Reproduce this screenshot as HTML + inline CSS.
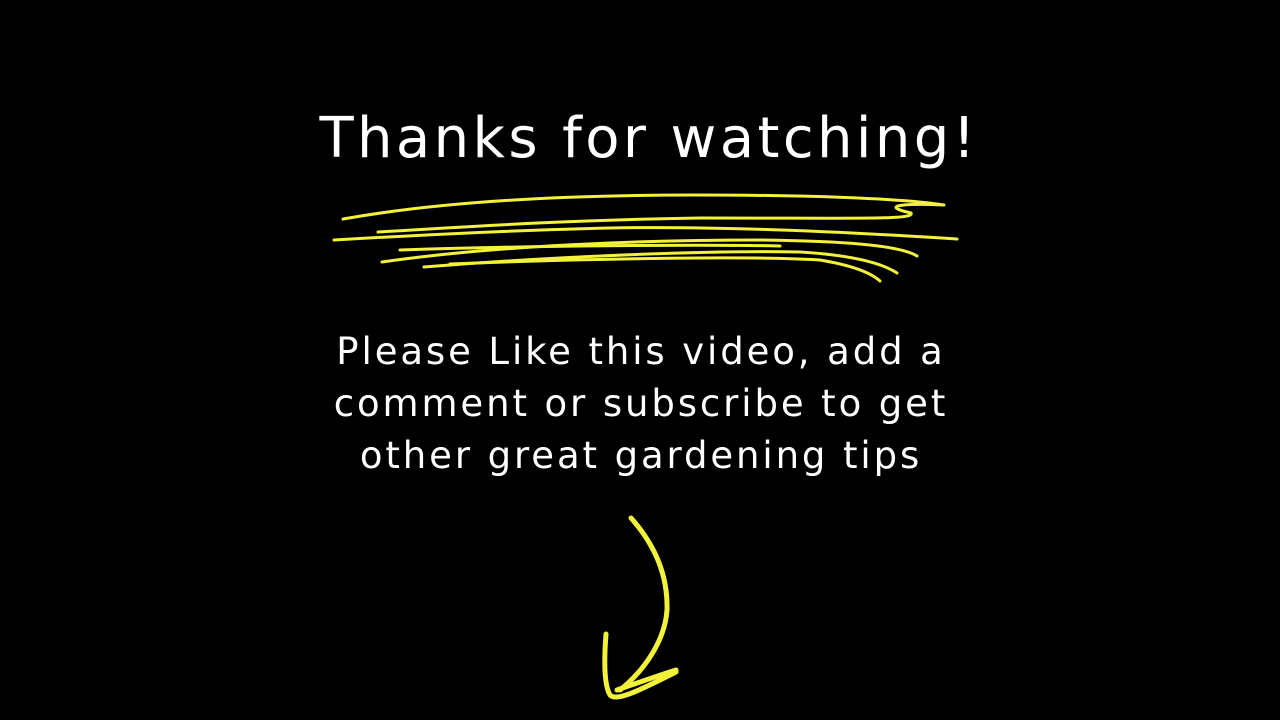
<!DOCTYPE html>
<html><head><meta charset="utf-8"><style>
html,body{margin:0;padding:0;background:#000;width:1280px;height:720px;overflow:hidden}
.t{position:absolute;left:0;width:1280px;text-align:center;color:#fff;font-family:"DejaVu Sans","Liberation Sans",sans-serif}
#h{top:104px;left:9px;font-size:56px;line-height:70px;letter-spacing:3.4px}
#b{top:326px;left:1px;font-size:37px;line-height:52px;letter-spacing:2.9px}
svg{position:absolute;left:0;top:0}
</style></head><body>
<div class="t" id="h">Thanks for watching!</div>
<div class="t" id="b">Please Like this video, add a<br>comment or subscribe to get<br>other great gardening tips</div>
<svg width="1280" height="720" fill="none" stroke="#f2f23a" stroke-linecap="round" stroke-linejoin="round">
<g stroke-width="3">
<path d="M343 219 C450 200 580 195 693 195 C800 195 900 198 944 205 C900 203 880 206 911 213 C915 220 860 218 700 218 C560 220 450 228 378 232"/>
<path d="M334 240 C420 235 520 230 610 228 C720 226 850 232 957 239"/>
<path d="M382 262 C500 245 650 240 760 240 C840 241 900 245 917 256"/>
<path d="M424 267 C560 256 720 250 800 252 C850 255 880 262 897 273"/>
<path d="M450 264 C600 258 760 256 820 260 C850 265 870 272 880 281"/>
<path d="M400 250 C520 246 700 244 780 246"/>
</g>
<g stroke-width="5">
<path d="M631 518 C655 545 668 575 667 610 C665 640 645 670 620 690"/>
<path d="M606 634 C604 660 604 685 610 695 C617 702 640 690 676 672"/>
<path d="M617 690 C640 682 660 675 676 670"/>
</g>
</svg>
</body></html>
